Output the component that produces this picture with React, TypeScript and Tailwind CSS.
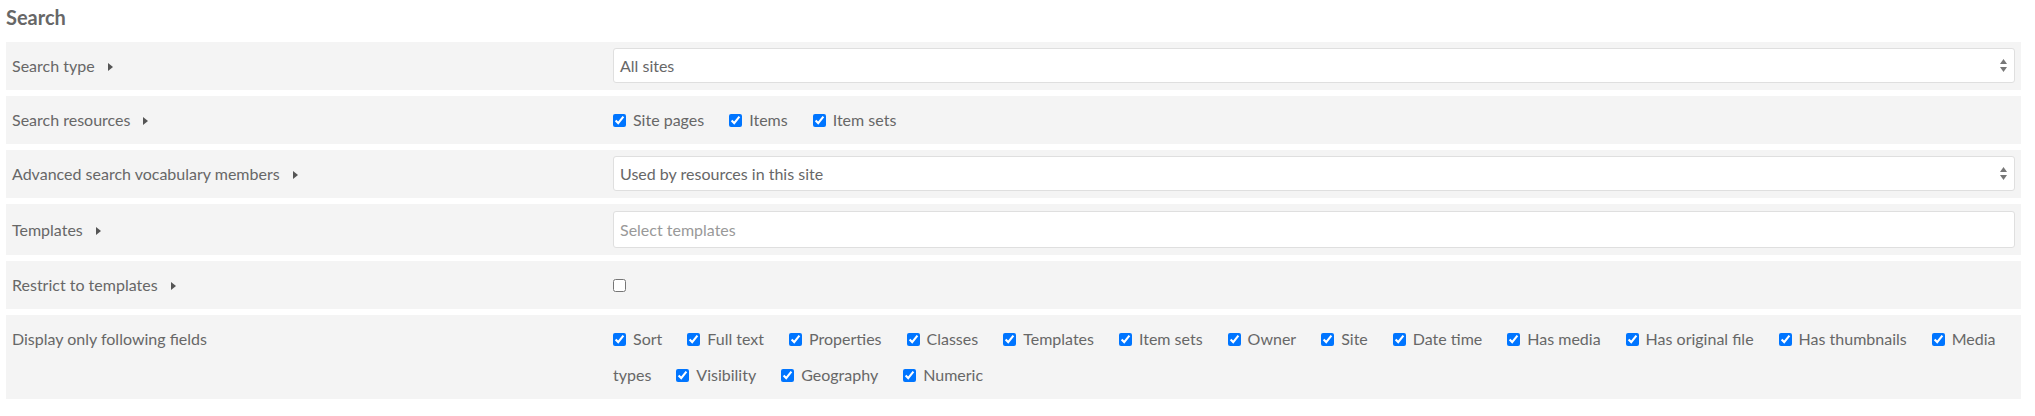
import React from 'react';

const Caret = () => (
  <svg className="inline-block ml-[13px] align-middle -mt-[2px]" width="5" height="8" viewBox="0 0 5 8">
    <path d="M0 0 L5 4 L0 8 Z" fill="#555" />
  </svg>
);

const SelectArrows = () => (
  <svg className="absolute right-[7px] top-1/2 -translate-y-1/2" width="7" height="14" viewBox="0 0 7 14">
    <path d="M3.5 0 L7 5 L0 5 Z" fill="#777" />
    <path d="M0 8 L7 8 L3.5 13 Z" fill="#777" />
  </svg>
);

const Row = ({ label, caret = true, children }: { label: string; caret?: boolean; children: React.ReactNode }) => (
  <div className="flex bg-[#f4f4f4] py-[6px] px-[6px] mb-[6px]">
    <div className="w-[601px] shrink-0 leading-[36px]">
      {label}
      {caret && <Caret />}
    </div>
    <div className="flex-1 min-w-0">{children}</div>
  </div>
);

const Check = ({ label, checked = true }: { label: string; checked?: boolean }) => {
  // labels with a space may wrap between words, like "Media types"
  const [first, ...rest] = label.split(' ');
  if (rest.length && label === 'Media types') {
    return (
      <>
        <span>
          <input type="checkbox" defaultChecked={checked} className="ml-0 mr-[7px] align-middle -mt-[3px] w-[13px] h-[13px]" />
          {first}
        </span>{' '}
        <span className="mr-[25px]">{rest.join(' ')}</span>
      </>
    );
  }
  return (
    <span className="mr-[25px]">
      <input type="checkbox" defaultChecked={checked} className="ml-0 mr-[7px] align-middle -mt-[3px] w-[13px] h-[13px]" />
      {label}
    </span>
  );
};

const fields = ['Sort', 'Full text', 'Properties', 'Classes', 'Templates', 'Item sets', 'Owner', 'Site', 'Date time', 'Has media', 'Has original file', 'Has thumbnails', 'Media types', 'Visibility', 'Geography', 'Numeric'];

export default function App() {
  return (
    <div className="bg-white w-[2035px] h-[416px] pl-[6px] pr-[14px] text-[#676767] text-[16px]" style={{ fontFamily: 'Lato, "Open Sans", sans-serif' }}>
      <h2 className="text-[20px] font-bold leading-[24px] pt-[5px] pb-[13px]">Search</h2>

      <Row label="Search type">
        <div className="relative h-[35px] bg-white border border-[#dfdfdf] rounded-[3px] pl-[6px] leading-[33px]">
          All sites
          <SelectArrows />
        </div>
      </Row>

      <Row label="Search resources">
        <div className="leading-[36px]">
          <Check label="Site pages" />
          <Check label="Items" />
          <Check label="Item sets" />
        </div>
      </Row>

      <Row label="Advanced search vocabulary members">
        <div className="relative h-[35px] bg-white border border-[#dfdfdf] rounded-[3px] pl-[6px] leading-[33px]">
          Used by resources in this site
          <SelectArrows />
        </div>
      </Row>

      <div className="flex bg-[#f4f4f4] pt-[7px] pb-[7px] px-[6px] mb-[6px]">
        <div className="w-[601px] shrink-0 leading-[37px]">
          Templates
          <Caret />
        </div>
        <div className="flex-1 min-w-0">
          <div className="h-[37px] bg-white border border-[#dfdfdf] rounded-[3px] pl-[6px] leading-[35px] text-[#999]">
            Select templates
          </div>
        </div>
      </div>

      <Row label="Restrict to templates">
        <div className="leading-[36px]">
          <input type="checkbox" className="ml-0 align-middle -mt-[3px] w-[13px] h-[13px]" />
        </div>
      </Row>

      <Row label="Display only following fields" caret={false}>
        <div className="leading-[36px] pr-[4px]">
          {fields.map((f) => (
            <Check key={f} label={f} />
          ))}
        </div>
      </Row>
    </div>
  );
}
